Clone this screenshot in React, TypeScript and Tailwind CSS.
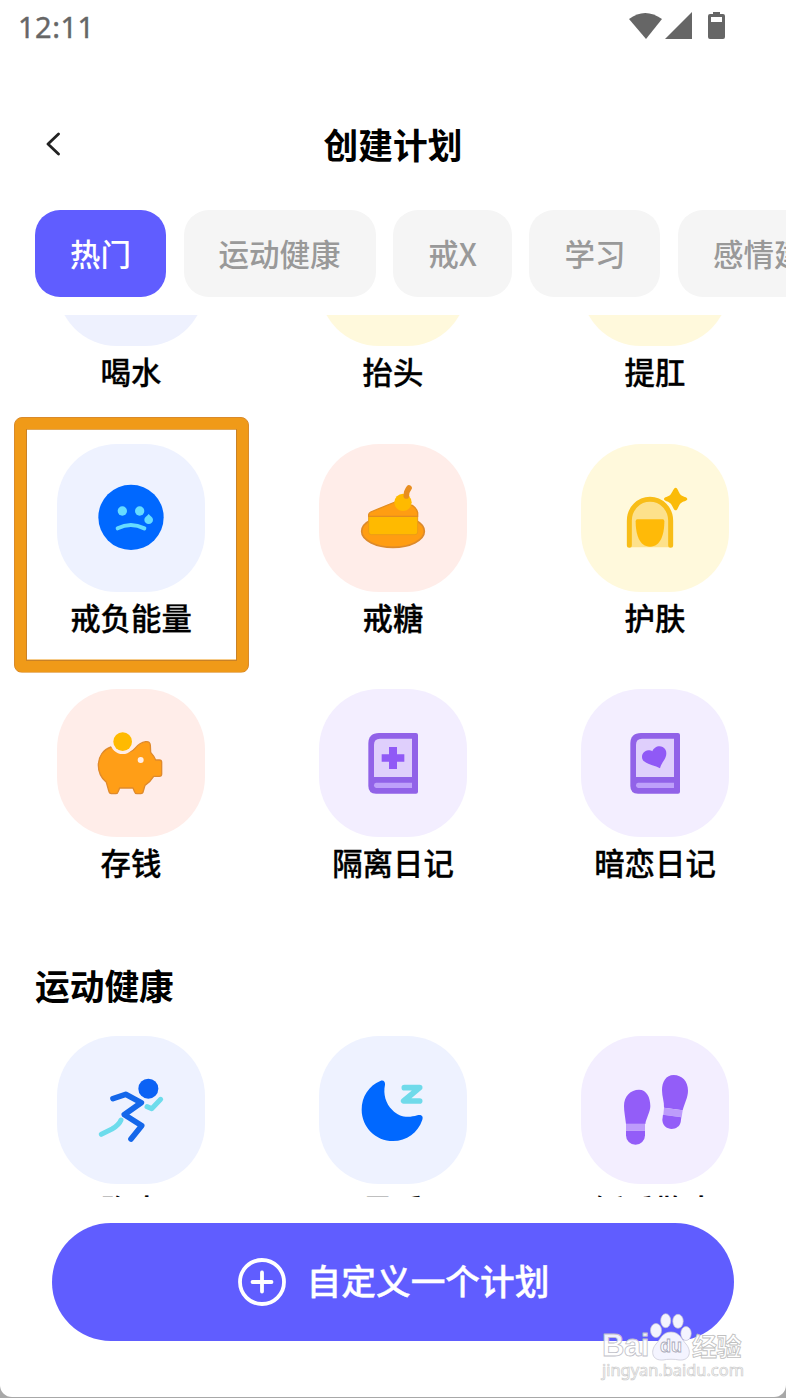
import React from 'react';

type Plan = {
  name: string;
  tile: string;
  icon?: React.ReactNode;
  highlighted?: boolean;
};

const SadFaceIcon = () => (
  <svg viewBox="0 -6 330 330" className="h-[110px] w-[110px]" fill="none">
    <circle cx="165" cy="157" r="98" fill="#0068ff" />
    <circle cx="139" cy="138" r="14" fill="#66dcff" />
    <circle cx="191" cy="138" r="14" fill="#66dcff" />
    <path d="M125 190Q164 170 205 190" stroke="#66dcff" strokeWidth="12" strokeLinecap="round" />
    <path d="M218 147c-5 6-13 10-13 17a13 13 0 0 0 26 0c0-7-8-11-13-17z" fill="#66dcff" />
  </svg>
);

const CakeIcon = () => (
  <svg viewBox="-6 9 330 330" className="h-[110px] w-[110px]" fill="none">
    <ellipse cx="159" cy="214" rx="94" ry="48" fill="#ff9d12" stroke="#dd8a2b" strokeWidth="5" />
    <path d="M86 168h147v48q0 8-8 8H94q-8 0-8-8z" fill="#ffba00" stroke="#ec9d16" strokeWidth="3" />
    <path d="M86 169v-5q0-5 6-8l73-30 52 10q14 10 16 22v11z" fill="#ff9d12" stroke="#e38d20" strokeWidth="4" strokeLinejoin="round" />
    <circle cx="189" cy="127" r="26" fill="#ffba00" />
    <path d="M199 108q0-14 8-24" stroke="#e88e20" strokeWidth="17" strokeLinecap="round" />
  </svg>
);

const FaceIcon = () => (
  <svg viewBox="0 9 330 330" className="h-[110px] w-[110px]" fill="none">
    <path d="M88 262v-80a62 64 0 0 1 124 0v80z" fill="#fde18b" />
    <path d="M88 256v-74a62 64 0 0 1 124 0v74" stroke="#f8bd17" strokeWidth="15" strokeLinecap="round" />
    <path d="M112 178h76q5 0 5 6c0 40-11 76-43 76s-43-36-43-76q0-6 5-6z" fill="#ffba08" />
    <path d="M227 83c6 0 9 15 15 21s20 7 20 13-14 7-20 13-9 21-15 21-10-15-16-21-19-7-19-13 13-7 19-13 10-21 16-21z" fill="#fbbb08" />
  </svg>
);

const PiggyIcon = () => (
  <svg viewBox="0 9 330 330" className="h-[110px] w-[110px]" fill="none">
    <path
      d="M105 126C82 134 67 154 67 181c0 21 8 38 24 51l7 25q2 9 8 9h13q6 0 8-7l4-10h40l4 10q2 7 8 7h11q7 0 8-8l5-17q15-9 26-27h17q7 0 7-7v-35q0-7-7-7h-11q-4-11-15-23l-1-21q-1-13-14-11-18 3-32 20-12 14-38 12z"
      fill="#ff9e17"
      stroke="#df8a2c"
      strokeWidth="4"
      strokeLinejoin="round"
    />
    <circle cx="140" cy="110" r="37" fill="#ffede7" />
    <circle cx="140" cy="110" r="28" fill="#ffba00" />
    <circle cx="194" cy="165" r="9" fill="#ffede7" />
  </svg>
);

const BookIcon = ({ children }: { children: React.ReactNode }) => (
  <svg viewBox="-6 9 330 330" className="h-[110px] w-[110px]" fill="none">
    <path d="M117 84h111q6 0 6 6v170q0 6-6 6H108q-23 0-23-23V116q0-32 32-32z" fill="#9162e8" />
    <path d="M120 101h96v115h-114v-97q0-18 18-18z" fill="#dfcffc" />
    <path d="M108 233h108v16H108q-6 0-6-8t6-8z" fill="#bea0fa" />
    {children}
  </svg>
);

const RunnerIcon = () => (
  <svg viewBox="0 0 330 330" className="h-[110px] w-[110px]" fill="none" strokeLinecap="round" strokeLinejoin="round">
    <circle cx="217" cy="101" r="30" fill="#0b62f5" />
    <path d="M111 131 149 118 196 143 145 179 197 212 165 252" stroke="#1467ea" strokeWidth="17" />
    <path d="M213 155 227 161 254 133" stroke="#6ddcec" strokeWidth="15" />
    <path d="M76 238 108 222Q129 210 135 195" stroke="#6ddcec" strokeWidth="15" />
  </svg>
);

const MoonIcon = () => (
  <svg viewBox="-6 0 330 330" className="h-[110px] w-[110px]" fill="none">
    <path d="M121 78c9-4 15 2 14 11-6 28 2 56 22 76 20 21 46 25 75 16 11-3 19 2 15 13-13 39-47 64-88 64-52 0-94-42-94-94 0-39 22-72 56-86z" fill="#0068ff" />
    <path d="M193 98h46l-48 40h48" stroke="#6fdaea" strokeWidth="17" strokeLinecap="round" strokeLinejoin="round" />
  </svg>
);

const FootprintsIcon = () => (
  <svg viewBox="780 0 330 330" className="h-[110px] w-[110px]" fill="none">
    <path d="M897 104c23 0 34 23 34 49 0 18-13 37-15 54h-58c-2-20-6-37-6-54 0-30 20-49 45-49z" fill="#935df8" />
    <path d="M858 206h57v21h-57z" fill="#bd9cfb" />
    <path d="M858 227h57v14a28 28 0 0 1-57 0z" fill="#935df8" />
    <path d="M1001 60c25 0 43 19 43 47 0 20-11 39-16 59l-56-8c1-18-6-33-6-52 0-26 12-46 35-46z" fill="#935df8" />
    <path d="M972 158l56 8-3 21-55-8z" fill="#bd9cfb" />
    <path d="M969 179l55 8-2 14c-5 28-53 29-55-6z" fill="#935df8" />
  </svg>
);

const tabs = ['热门', '运动健康', '戒X', '学习', '感情建设'];

const hotPlans: Plan[] = [
  { name: '喝水', tile: 'bg-[#eef1fe]' },
  { name: '抬头', tile: 'bg-[#fff9dc]' },
  { name: '提肛', tile: 'bg-[#fff9dc]' },
  { name: '戒负能量', tile: 'bg-[#eef2ff]', icon: <SadFaceIcon />, highlighted: true },
  { name: '戒糖', tile: 'bg-[#ffede9]', icon: <CakeIcon /> },
  { name: '护肤', tile: 'bg-[#fff9dc]', icon: <FaceIcon /> },
  { name: '存钱', tile: 'bg-[#ffede9]', icon: <PiggyIcon /> },
  {
    name: '隔离日记',
    tile: 'bg-[#f3eeff]',
    icon: (
      <BookIcon>
        <path d="M147 126h24v22h22v22h-22v22h-24v-22h-22v-22h22z" fill="#9059f6" />
      </BookIcon>
    ),
  },
  {
    name: '暗恋日记',
    tile: 'bg-[#f3eeff]',
    icon: (
      <BookIcon>
        <path d="M174 190c-15-9-36-11-48-21-12-11-5-31 13-33 6 0 9 1 12 3 4-12 19-19 31-13 16 8 12 28 4 40-5 8-10 15-12 24z" fill="#9059f6" />
      </BookIcon>
    ),
  },
];

const healthPlans: Plan[] = [
  { name: '跑步', tile: 'bg-[#eef2ff]', icon: <RunnerIcon /> },
  { name: '早睡', tile: 'bg-[#eef2ff]', icon: <MoonIcon /> },
  { name: '饭后散步', tile: 'bg-[#f3eeff]', icon: <FootprintsIcon /> },
];

const PlanGrid = ({ plans }: { plans: Plan[] }) => (
  <div className="grid grid-cols-3 gap-y-[54.5px]">
    {plans.map(plan => (
      <div key={plan.name} className="relative flex flex-col items-center">
        <div className={`flex h-[148px] w-[148px] items-center justify-center rounded-[60px] ${plan.tile}`}>
          {plan.icon}
        </div>
        <span className="mt-[7px] text-[30.4px] leading-9 font-medium text-black [-webkit-text-stroke:0.3px_#000]">{plan.name}</span>
        {plan.highlighted && (
          <div className="absolute -top-[27px] left-[14px] h-[256px] w-[235px] rounded-lg border border-[#d98a2b] bg-[#f09a18] [clip-path:polygon(evenodd,0_0,100%_0,100%_100%,0_100%,0_0,13px_13px,222px_13px,222px_243px,13px_243px,13px_13px)]">
            <div className="absolute inset-[11px] border border-[#c98227]" />
          </div>
        )}
      </div>
    ))}
  </div>
);

const StatusBar = () => (
  <div className="flex h-[54px] shrink-0 items-center justify-between pr-[60px] pl-[18px] text-[#666]">
    <span className="pb-0.5 font-['Noto_Sans'] text-[29px] leading-none tracking-[0.5px] [-webkit-text-stroke:0.4px_#666]">12:11</span>
    <svg viewBox="0 0 97 30" className="h-[30px] w-[97px]" fill="#666">
      <path d="M0 7Q16-5 33 7L17 27z" />
      <path d="M63 0v27H36z" />
      <path fillRule="evenodd" d="M84-1h7v3h3q2 0 2 2v21q0 2-2 2H81q-2 0-2-2V4q0-2 2-2h3zM82 5v5h11V5z" />
    </svg>
  </div>
);

const Watermark = () => (
  <div className="absolute top-[1312px] left-[602px] w-[144px] pt-[21px] text-white/90">
    <svg viewBox="0 0 144 56" className="absolute top-0 left-0 h-[56px] w-[144px]" fill="#f4f4ff" stroke="#c4c4d2" strokeWidth="0.7">
      <ellipse cx="54" cy="18.500" rx="5.500" ry="7" />
      <ellipse cx="63.700" cy="8.700" rx="5" ry="7" />
      <ellipse cx="76" cy="9.300" rx="5.200" ry="7" />
      <ellipse cx="84" cy="21.500" rx="5.200" ry="7" />
      <path d="M69 20c9 0 11 8 15 12 6 7 4 17-7 16-4-1-12-1-16 0-11 1-13-9-7-16 4-4 6-12 15-12z" />
    </svg>
    <div className="relative flex h-[26px] items-center font-['Liberation_Sans'] leading-none font-bold">
      <span className="w-[51px] text-[31px] leading-[26px] tracking-[-0.5px] [-webkit-text-stroke:0.8px_#c0c0c8]">Bai</span>
      <span className="w-[39px] pl-[7px] text-[18px] leading-[26px] [-webkit-text-stroke:0.8px_#a8a8b8]">du</span>
      <span className="pb-0.5 font-['Noto_Sans_CJK_SC'] text-[25px] leading-[24px] font-bold tracking-[-0.5px] whitespace-nowrap [-webkit-text-stroke:0.8px_#c0c0c0]">经验</span>
    </div>
    <div className="relative font-['Noto_Sans'] text-[16.400px] leading-[22px] whitespace-nowrap [-webkit-text-stroke:0.7px_#cccccc]">jingyan.baidu.com</div>
  </div>
);

export default function App() {
  return (
    <div className="h-[1398px] w-[786px] overflow-hidden bg-[#a8a8a8]">
      <div className="relative flex h-[1397px] flex-col overflow-hidden rounded-b-[12px] bg-white font-['Noto_Sans_CJK_SC',sans-serif]">
        <StatusBar />

        <header className="mt-9 grid h-[110px] shrink-0 grid-cols-3 items-center">
          <svg viewBox="0 0 14 24" className="-mt-0.5 ml-[46px] h-6 w-[14px]" fill="none" stroke="#222" strokeWidth="2.8" strokeLinecap="round" strokeLinejoin="round">
            <path d="M12.500 2 2 12l10.500 10" />
          </svg>
          <h1 className="pb-0.5 text-center text-[34.7px] leading-none font-bold text-black">创建计划</h1>
        </header>

        <nav className="mt-[10px] flex h-[87px] shrink-0 gap-[17.6px] overflow-hidden pl-[35px]">
          {tabs.map((tab, i) => (
            <button
              key={tab}
              className={`flex shrink-0 items-center justify-center rounded-[25px] px-[35px] text-[30.5px] font-medium ${
                i === 0 ? 'bg-[#605dff] text-white' : 'bg-[#f5f5f5] text-[#999]'
              }`}
            >
              {tab}
            </button>
          ))}
        </nav>

        {/* Scrolled plan list */}
        <main className="mt-[18px] h-[882px] shrink-0 overflow-hidden">
          <div className="-mt-[117px]">
            <PlanGrid plans={hotPlans} />
            <h2 className="mt-[85px] mb-[31px] pl-[35px] text-[34.7px] leading-10 font-bold text-black">运动健康</h2>
            <PlanGrid plans={healthPlans} />
          </div>
        </main>

        <button className="mt-[26px] ml-[52px] flex h-[118px] w-[682px] shrink-0 items-center justify-center gap-[21px] rounded-full bg-[#605dff] pl-px text-white">
          <svg viewBox="0 0 48 48" className="h-12 w-12" fill="none" stroke="currentColor" strokeWidth="3.8" strokeLinecap="round">
            <circle cx="24" cy="24" r="22" />
            <path d="M24 14.500v19M14.500 24h19" />
          </svg>
          <span className="pb-1 text-[34.7px] leading-none font-medium [-webkit-text-stroke:0.4px_#fff]">自定义一个计划</span>
        </button>

        <Watermark />
      </div>
    </div>
  );
}
